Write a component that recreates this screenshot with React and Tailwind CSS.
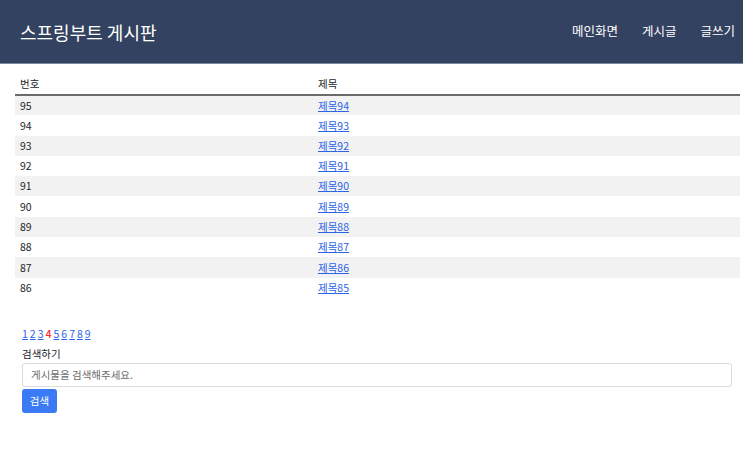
import React from 'react';

const rows = [95, 94, 93, 92, 91, 90, 89, 88, 87, 86];

function App() {
  return (
    <div className="min-h-screen bg-white text-[#212529]" style={{ fontFamily: '"Noto Sans CJK KR", "Noto Sans", sans-serif' }}>
      {/* Header */}
      <header className="h-[64px] bg-[#334260] border-b border-[#7d8aa0] flex items-center justify-between pl-[20px] pr-[8px]">
        <h1 className="text-[18px] text-white leading-none">스프링부트 게시판</h1>
        <nav className="flex gap-[24px] text-[12.5px] text-white">
          <span>메인화면</span>
          <span>게시글</span>
          <span>글쓰기</span>
        </nav>
      </header>

      <main className="pl-[15px] pr-[3px] pt-[10px]">
        <table className="w-full text-[10.5px] border-collapse">
          <thead>
            <tr className="border-b-2 border-[#6b6b6b]">
              <th className="w-[303px] text-left font-normal pl-[5px] h-[21px]">번호</th>
              <th className="text-left font-normal h-[21px]">제목</th>
            </tr>
          </thead>
          <tbody>
            {rows.map((n, i) => (
              <tr key={n} className={i % 2 === 0 ? 'bg-[#f2f2f2]' : 'bg-white'}>
                <td className="pl-[5px] h-[20.3px]">{n}</td>
                <td className="h-[20.3px]">
                  <a className="text-[#2b63e8] underline">제목{n - 1}</a>
                </td>
              </tr>
            ))}
          </tbody>
        </table>

        <div className="pl-[7px] pr-[8px] mt-[29px]">
          <div className="flex gap-[2px] text-[10.5px] leading-[14px]">
            {[1, 2, 3, 4, 5, 6, 7, 8, 9].map((p) =>
              p === 4 ? (
                <span key={p} className="text-red-500 font-medium">{p}</span>
              ) : (
                <a key={p} className="text-[#2b63e8] underline">{p}</a>
              )
            )}
          </div>
          <div className="text-[10.5px] leading-[14px] mt-[6px]">검색하기</div>
          <input
            className="mt-[2px] w-full h-[24px] block border border-[#dcdcdc] rounded-[3px] px-[8px] text-[10.5px] placeholder-[#6c6c6c] outline-none"
            placeholder="게시물을 검색해주세요."
          />
          <button className="mt-[2px] h-[24px] w-[35px] block bg-[#3a7bf5] rounded-[3px] text-white text-[10.5px]">검색</button>
        </div>
      </main>
    </div>
  );
}

export default App;
